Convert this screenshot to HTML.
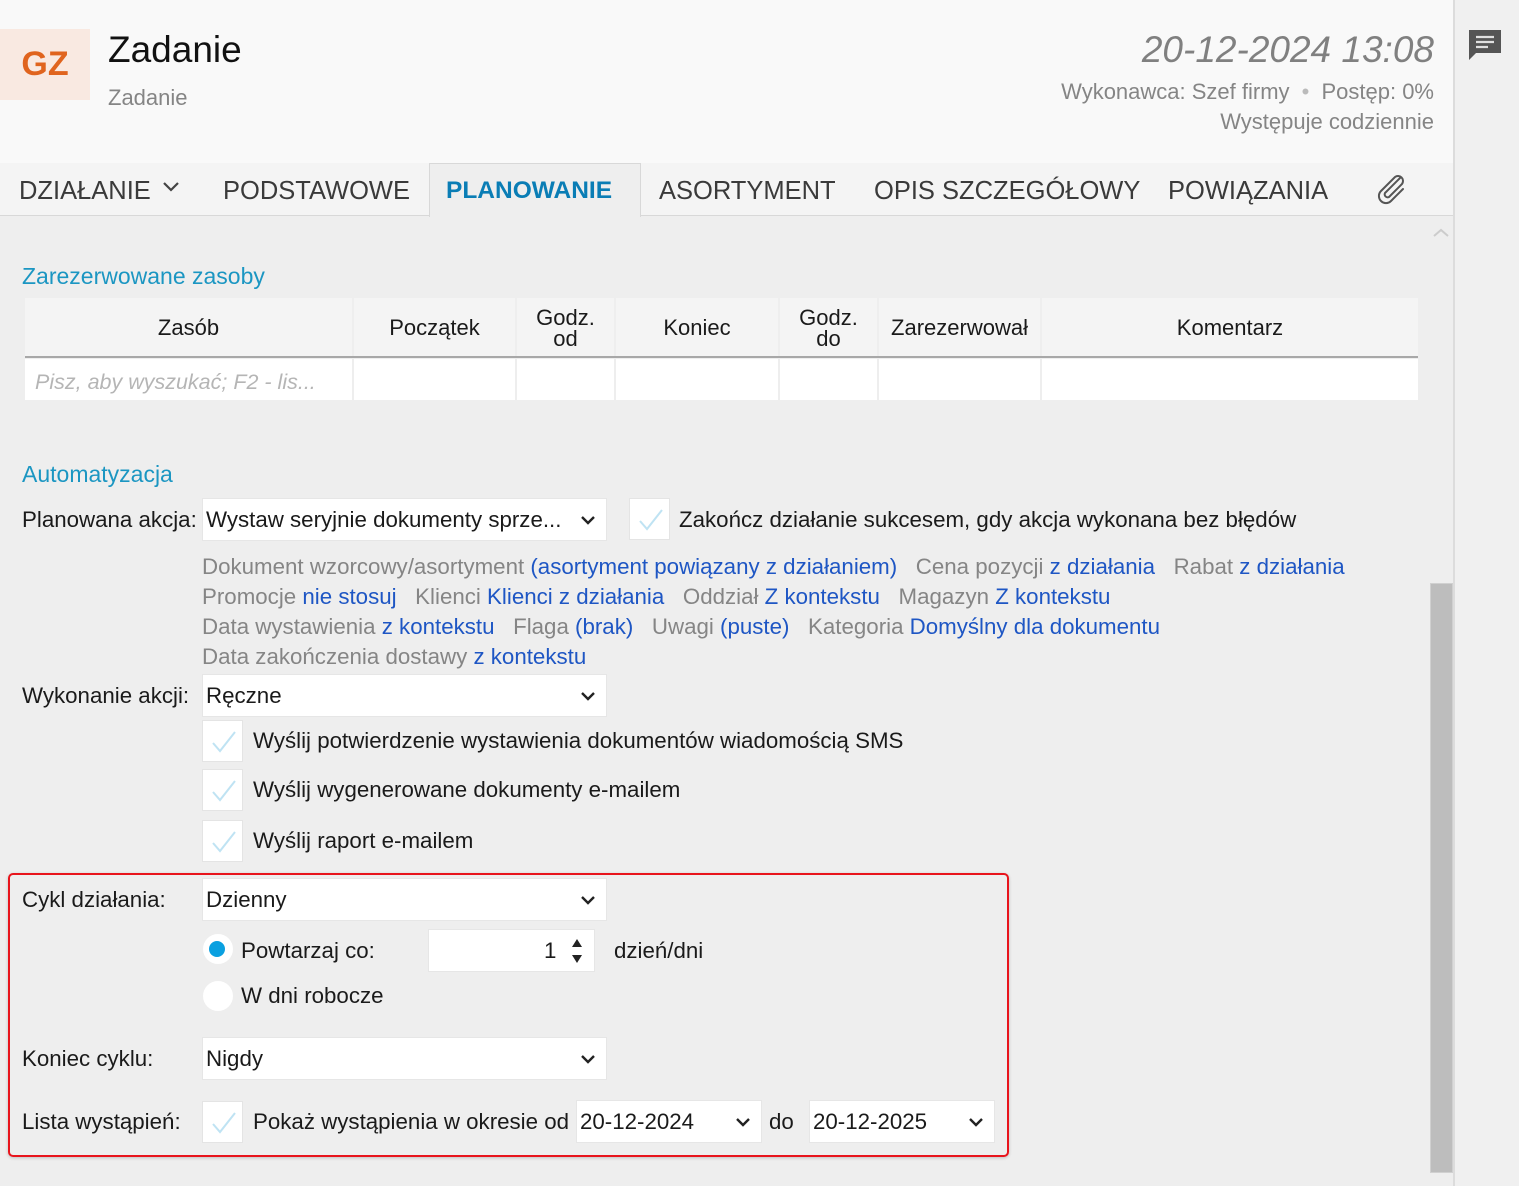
<!DOCTYPE html>
<html><head><meta charset="utf-8"><style>
*{box-sizing:border-box;margin:0;padding:0}
body{width:1519px;height:1186px;overflow:hidden;background:#eeeeee;font-family:"Segoe UI","Liberation Sans",sans-serif;color:#1a1a1a;position:relative}
.a{position:absolute;white-space:nowrap}
.t{font-size:22.3px;line-height:28px}
.g{color:#858585}.b{color:#1e56c4}
.sel{position:absolute;background:#fff;border:1px solid #e6e6e6;height:43px;font-size:22.3px;line-height:41px;padding-left:3px}
.sel svg{position:absolute;right:10px;top:15px}
.cb{position:absolute;width:41px;height:42px;background:#fff;border:1px solid #e4e4e4}
.cb svg{position:absolute;left:8px;top:9px}
.th{position:absolute;top:298px;height:59px;background:#f4f4f4;font-size:22px;text-align:center;display:flex;align-items:center;justify-content:center;line-height:21px}
.td{position:absolute;top:359px;height:41px;background:#fff}
.tab{font-size:25.5px;line-height:32px;color:#3a3a3a;top:175px}
</style></head><body>
<div class="a" style="left:0;top:0;width:1453px;height:163px;background:#f9f9f9"></div>
<div class="a" style="left:0;top:29px;width:90px;height:71px;background:#f9e9e1;color:#e0641e;font-size:34px;font-weight:bold;line-height:71px;text-align:center">GZ</div>
<div class="a" style="left:108px;top:28px;font-size:37px;line-height:44px;color:#111">Zadanie</div>
<div class="a g" style="left:108px;top:84px;font-size:22px;line-height:28px">Zadanie</div>
<div class="a" style="right:85px;top:28px;font-size:37px;line-height:44px;font-style:italic;color:#808080">20-12-2024 13:08</div>
<div class="a g" style="right:85px;top:78px;font-size:22px;line-height:28px">Wykonawca: Szef firmy <span style="color:#bbb;padding:0 6px">•</span> Postęp: 0%</div>
<div class="a g" style="right:85px;top:108px;font-size:22px;line-height:28px">Występuje codziennie</div>
<div class="a" style="left:0;top:163px;width:1453px;height:53px;background:#f4f4f4;border-bottom:1px solid #d8d8d8"></div>
<div class="a" style="left:429px;top:163px;width:212px;height:54px;background:#eeeeee;border:1px solid #d8d8d8;border-bottom:none"></div>
<div class="a tab" style="left:19px">DZIAŁANIE <svg width="18" height="12" viewBox="0 0 18 12" style="margin-left:4px;vertical-align:6px"><path d="M2 2l7 7 7-7" stroke="#444" stroke-width="2.2" fill="none"/></svg></div>
<div class="a tab" style="left:223px">PODSTAWOWE</div>
<div class="a tab" style="left:446px;color:#0a7db5;font-weight:bold;font-size:24.5px">PLANOWANIE</div>
<div class="a tab" style="left:659px">ASORTYMENT</div>
<div class="a tab" style="left:874px">OPIS SZCZEGÓŁOWY</div>
<div class="a tab" style="left:1168px">POWIĄZANIA</div>
<svg class="a" style="left:1372px;top:170px" width="36" height="36" viewBox="0 0 36 36"><path d="M28 8l-15 15a3 3 0 0 0 4 4l13-13a5 5 0 0 0-7-7L9 21a7 7 0 0 0 10 10l12-12" stroke="#555" stroke-width="2" fill="none" stroke-linecap="round"/></svg>
<svg class="a" style="left:1432px;top:227px" width="18" height="12" viewBox="0 0 18 12"><path d="M2 9l7-6 7 6" stroke="#ccc" stroke-width="2" fill="none"/></svg>
<div class="a" style="left:1453px;top:0;width:2px;height:1186px;background:#dcdcdc"></div>
<div class="a" style="left:1455px;top:0;width:64px;height:1186px;background:#f0f0f0"></div>
<svg class="a" style="left:1468px;top:28px" width="34" height="34" viewBox="0 0 34 34"><path d="M1 2h32v23H8l-7 7z" fill="#555"/><path d="M8 9h18M8 14h18M8 19h12" stroke="#e0e0e0" stroke-width="2.2"/></svg>
<div class="a" style="left:1430px;top:583px;width:23px;height:590px;background:#bdbdbd;border:1px solid #d0d0d0"></div>

<div class="a" style="left:22px;top:261px;font-size:23px;line-height:30px;color:#1b96c2">Zarezerwowane zasoby</div>
<div class="th" style="left:25px;width:327px">Zasób</div>
<div class="th" style="left:354px;width:161px">Początek</div>
<div class="th" style="left:517px;width:97px">Godz.<br>od</div>
<div class="th" style="left:616px;width:162px">Koniec</div>
<div class="th" style="left:780px;width:97px">Godz.<br>do</div>
<div class="th" style="left:879px;width:161px">Zarezerwował</div>
<div class="th" style="left:1042px;width:376px">Komentarz</div>
<div class="a" style="left:25px;top:356px;width:1393px;height:2px;background:#a8a8a8"></div>
<div class="td" style="left:25px;width:327px"></div>
<div class="td" style="left:354px;width:161px"></div>
<div class="td" style="left:517px;width:97px"></div>
<div class="td" style="left:616px;width:162px"></div>
<div class="td" style="left:780px;width:97px"></div>
<div class="td" style="left:879px;width:161px"></div>
<div class="td" style="left:1042px;width:376px"></div>
<div class="a" style="left:35px;top:368px;font-size:21.5px;line-height:28px;font-style:italic;color:#b5b5b5">Pisz, aby wyszukać; F2 - lis...</div>

<div class="a" style="left:22px;top:459px;font-size:23px;line-height:30px;color:#1b96c2">Automatyzacja</div>
<div class="a t" style="left:22px;top:506px">Planowana akcja:</div>
<div class="sel" style="left:202px;top:498px;width:405px">Wystaw seryjnie dokumenty sprze...<svg width="16" height="12" viewBox="0 0 16 12"><path d="M2 3l6 6 6-6" stroke="#222" stroke-width="2.4" fill="none"/></svg></div>
<div class="cb" style="left:629px;top:498px"><svg width="26" height="24" viewBox="0 0 26 24"><path d="M2 13l7 8L24 2" stroke="#bfe3f3" stroke-width="2" fill="none"/></svg></div>
<div class="a t" style="left:679px;top:506px">Zakończ działanie sukcesem, gdy akcja wykonana bez błędów</div>
<div class="a t g" style="left:202px;top:553px">Dokument wzorcowy/asortyment <span class="b">(asortyment powiązany z działaniem)</span> &nbsp; Cena pozycji <span class="b">z działania</span> &nbsp; Rabat <span class="b">z działania</span></div>
<div class="a t g" style="left:202px;top:583px">Promocje <span class="b">nie stosuj</span> &nbsp; Klienci <span class="b">Klienci z działania</span> &nbsp; Oddział <span class="b">Z kontekstu</span> &nbsp; Magazyn <span class="b">Z kontekstu</span></div>
<div class="a t g" style="left:202px;top:613px">Data wystawienia <span class="b">z kontekstu</span> &nbsp; Flaga <span class="b">(brak)</span> &nbsp; Uwagi <span class="b">(puste)</span> &nbsp; Kategoria <span class="b">Domyślny dla dokumentu</span></div>
<div class="a t g" style="left:202px;top:643px">Data zakończenia dostawy <span class="b">z kontekstu</span></div>
<div class="a t" style="left:22px;top:682px">Wykonanie akcji:</div>
<div class="sel" style="left:202px;top:674px;width:405px">Ręczne<svg width="16" height="12" viewBox="0 0 16 12"><path d="M2 3l6 6 6-6" stroke="#222" stroke-width="2.4" fill="none"/></svg></div>
<div class="cb" style="left:202px;top:720px"><svg width="26" height="24" viewBox="0 0 26 24"><path d="M2 13l7 8L24 2" stroke="#bfe3f3" stroke-width="2" fill="none"/></svg></div>
<div class="a t" style="left:253px;top:727px">Wyślij potwierdzenie wystawienia dokumentów wiadomością SMS</div>
<div class="cb" style="left:202px;top:769px"><svg width="26" height="24" viewBox="0 0 26 24"><path d="M2 13l7 8L24 2" stroke="#bfe3f3" stroke-width="2" fill="none"/></svg></div>
<div class="a t" style="left:253px;top:776px">Wyślij wygenerowane dokumenty e-mailem</div>
<div class="cb" style="left:202px;top:820px"><svg width="26" height="24" viewBox="0 0 26 24"><path d="M2 13l7 8L24 2" stroke="#bfe3f3" stroke-width="2" fill="none"/></svg></div>
<div class="a t" style="left:253px;top:827px">Wyślij raport e-mailem</div>

<div class="a" style="left:8px;top:873px;width:1001px;height:284px;border:2px solid #e8141c;border-radius:5px;box-shadow:0 1px 3px rgba(0,0,0,.2)"></div>
<div class="a t" style="left:22px;top:886px">Cykl działania:</div>
<div class="sel" style="left:202px;top:878px;width:405px">Dzienny<svg width="16" height="12" viewBox="0 0 16 12"><path d="M2 3l6 6 6-6" stroke="#222" stroke-width="2.4" fill="none"/></svg></div>
<div class="a" style="left:203px;top:934px;width:30px;height:30px;border-radius:50%;background:#fff"></div>
<div class="a" style="left:209px;top:941px;width:16px;height:16px;border-radius:50%;background:#0aa0e0"></div>
<div class="a t" style="left:241px;top:937px">Powtarzaj co:</div>
<div class="a" style="left:428px;top:929px;width:167px;height:43px;background:#fff;border:1px solid #e6e6e6"></div>
<div class="a t" style="left:544px;top:937px">1</div>
<svg class="a" style="left:570px;top:936px" width="14" height="30" viewBox="0 0 14 30"><path d="M2 11L7 3l5 8z M2 19l5 8 5-8z" fill="#222"/></svg>
<div class="a t" style="left:614px;top:937px">dzień/dni</div>
<div class="a" style="left:203px;top:981px;width:30px;height:30px;border-radius:50%;background:#fff"></div>
<div class="a t" style="left:241px;top:982px">W dni robocze</div>
<div class="a t" style="left:22px;top:1045px">Koniec cyklu:</div>
<div class="sel" style="left:202px;top:1037px;width:405px">Nigdy<svg width="16" height="12" viewBox="0 0 16 12"><path d="M2 3l6 6 6-6" stroke="#222" stroke-width="2.4" fill="none"/></svg></div>
<div class="a t" style="left:22px;top:1108px">Lista wystąpień:</div>
<div class="cb" style="left:202px;top:1101px"><svg width="26" height="24" viewBox="0 0 26 24"><path d="M2 13l7 8L24 2" stroke="#bfe3f3" stroke-width="2" fill="none"/></svg></div>
<div class="a t" style="left:253px;top:1108px">Pokaż wystąpienia w okresie od</div>
<div class="sel" style="left:576px;top:1100px;width:186px">20-12-2024<svg width="16" height="12" viewBox="0 0 16 12"><path d="M2 3l6 6 6-6" stroke="#222" stroke-width="2.4" fill="none"/></svg></div>
<div class="a t" style="left:769px;top:1108px">do</div>
<div class="sel" style="left:809px;top:1100px;width:186px">20-12-2025<svg width="16" height="12" viewBox="0 0 16 12"><path d="M2 3l6 6 6-6" stroke="#222" stroke-width="2.4" fill="none"/></svg></div>
</body></html>
